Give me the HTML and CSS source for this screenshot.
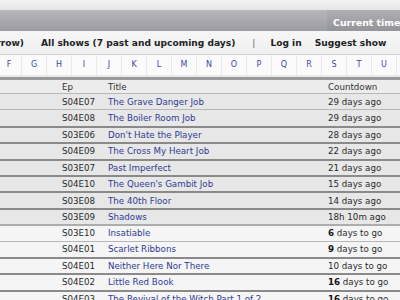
FILE: index.html
```html
<!DOCTYPE html>
<html>
	<head>
		<meta charset="UTF-8">
		<title>Schedule</title>
		<link rel="stylesheet" href="styles.css">
	</head>
	<body>
		<div class="top"></div>
		<div class="titlebar">
			<span class="clock">Current time: 21:14</span>
		</div>
		<div class="nav">
			<span class="first"><a>Tonight (and tomorrow)</a></span>
			<a class="all">All shows (7 past and upcoming days)</a>
			<span class="sep">|</span>
			<a class="login">Log in</a>
			<a>Suggest show</a>
		</div>
		<div class="letters">
			<a>A</a><a>B</a><a>C</a><a>D</a><a>E</a><a>F</a><a>G</a><a>H</a><a>I</a>
			<a>J</a><a>K</a><a>L</a><a>M</a><a>N</a><a>O</a><a>P</a><a>Q</a><a>R</a>
			<a>S</a><a>T</a><a>U</a><a>V</a><a>W</a><a>X</a><a>Y</a><a>Z</a>
		</div>
		<div class="list">
			<div class="row head">
				<span></span><span>Ep</span><span>Title</span><span>Countdown</span>
			</div>
			<div class="row">
				<span></span><span>S04E07</span><a>The Grave Danger Job</a><span>29 days ago</span>
			</div>
			<div class="row">
				<span></span><span>S04E08</span><a>The Boiler Room Job</a><span>29 days ago</span>
			</div>
			<div class="row cut">
				<span></span><span>S03E06</span><a>Don't Hate the Player</a><span>28 days ago</span>
			</div>
			<div class="row cut">
				<span></span><span>S04E09</span><a>The Cross My Heart Job</a><span>22 days ago</span>
			</div>
			<div class="row cut">
				<span></span><span>S03E07</span><a>Past Imperfect</a><span>21 days ago</span>
			</div>
			<div class="row cut">
				<span></span><span>S04E10</span><a>The Queen's Gambit Job</a><span>15 days ago</span>
			</div>
			<div class="row cut">
				<span></span><span>S03E08</span><a>The 40th Floor</a><span>14 days ago</span>
			</div>
			<div class="row cut">
				<span></span><span>S03E09</span><a>Shadows</a><span>18h 10m ago</span>
			</div>
			<div class="row next split">
				<span></span><span>S03E10</span><a>Insatiable</a><span><b>6</b> days to go</span>
			</div>
			<div class="row next">
				<span></span><span>S04E01</span><a>Scarlet Ribbons</a><span><b>9</b> days to go</span>
			</div>
			<div class="row next cut">
				<span></span><span>S04E01</span><a>Neither Here Nor There</a><span>10 days to go</span>
			</div>
			<div class="row next cut">
				<span></span><span>S04E02</span><a>Little Red Book</a><span><b>16</b> days to go</span>
			</div>
			<div class="row next cut">
				<span></span><span>S04E03</span><a>The Revival of the Witch Part 1 of 2</a><span><b>16</b> days to go</span>
			</div>
		</div>
	</body>
</html>
```

FILE: styles.css
```css
* {
	margin: 0;
	padding: 0;
}

body {
	overflow: hidden;
	background-color: #fff;
	color: #2a2a2a;
	font: 8.7px "DejaVu Sans", "Liberation Sans", sans-serif;
}

.top {
	height: 10px;
	background: linear-gradient(#f3f3f3, #e4e4e6);
}

.titlebar {
	display: flex;
	justify-content: flex-end;
	height: 21px;
	background: linear-gradient(#b6b6bb, #9c9ca3);
}

.clock {
	width: 67px;
	padding: 7px 0 0 6px;
	white-space: nowrap;
	overflow: hidden;
	background: linear-gradient(#aeaeb4, #94949b);
	color: #fff;
	font-weight: bold;
	font-size: 9.4px;
}

/* navigation */
.nav {
	display: flex;
	align-items: center;
	height: 23px;
	margin-left: -120px;
	background: linear-gradient(#f7f7f7, #efefef);
	color: #222;
	font-weight: bold;
	font-size: 9.1px;
	white-space: nowrap;
}

.nav .first {
	display: flex;
	justify-content: flex-end;
	flex: none;
	width: 144px;
	margin-right: 17px;
	overflow: hidden;
}

.nav .all {
	margin-right: 17px;
}

.nav .sep {
	margin-right: 15px;
	font-weight: normal;
	color: #666;
}

.nav .login {
	margin-right: 13px;
}

/* letters */
.letters {
	display: flex;
	height: 23px;
	margin-left: -128px;
	border-top: 1px solid #d0d0d0;
	background-color: #e9e9e9;
	box-sizing: border-box;
}

.letters a {
	flex: none;
	width: 24px;
	height: 20px;
	line-height: 20px;
	margin-right: 1px;
	text-align: center;
	background-color: #fbfbfb;
	color: #3b47a3;
	font-size: 8px;
}

/* schedule */
.row {
	display: grid;
	grid-template-columns: 62px 46px 220px 1fr;
	align-items: center;
	box-sizing: border-box;
	height: 16.4px;
	border-top: 1px solid #b8b8b8;
	background-color: #e7e7e7;
	white-space: nowrap;
}

.row.head {
	height: 16px;
	border-top: 3px solid #9a9a9a;
	background-color: #ececec;
	color: #333;
}

.row.cut {
	border-top: 2px solid #8a8a8a;
}

.row.split {
	border-top: 2px solid #adadad;
}

.row.next {
	background-color: #f5f5f5;
}

.row a {
	color: #2e3a94;
}

.row b {
	color: #111;
}
```
